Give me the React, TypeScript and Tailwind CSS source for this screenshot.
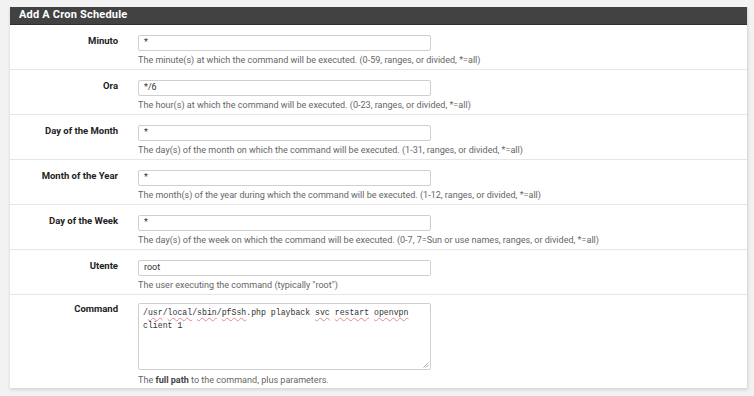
import type { ReactNode } from 'react';

interface FieldRow {
  label: string;
  value: string;
  help: ReactNode;
}

const ROWS: FieldRow[] = [
  {
    label: 'Minuto',
    value: '*',
    help: 'The minute(s) at which the command will be executed. (0-59, ranges, or divided, *=all)',
  },
  {
    label: 'Ora',
    value: '*/6',
    help: 'The hour(s) at which the command will be executed. (0-23, ranges, or divided, *=all)',
  },
  {
    label: 'Day of the Month',
    value: '*',
    help: 'The day(s) of the month on which the command will be executed. (1-31, ranges, or divided, *=all)',
  },
  {
    label: 'Month of the Year',
    value: '*',
    help: 'The month(s) of the year during which the command will be executed. (1-12, ranges, or divided, *=all)',
  },
  {
    label: 'Day of the Week',
    value: '*',
    help: 'The day(s) of the week on which the command will be executed. (0-7, 7=Sun or use names, ranges, or divided, *=all)',
  },
  {
    label: 'Utente',
    value: 'root',
    help: 'The user executing the command (typically "root")',
  },
];

const font = { fontFamily: 'Roboto, "Liberation Sans", sans-serif' };

// parole segnate dal correttore ortografico del browser
function Typo({ children }: { children: ReactNode }) {
  return (
    <span className="underline decoration-wavy decoration-[#e88a8a] decoration-[1px] underline-offset-[2px]">
      {children}
    </span>
  );
}

function Label({ children }: { children: ReactNode }) {
  return (
    <div className="w-[128px] shrink-0 pr-[20px] text-right text-[9.5px] font-bold leading-[12px] text-[#222]">
      {children}
    </div>
  );
}

export default function App() {
  return (
    <div
      className="h-[396px] w-[754px] overflow-hidden bg-[#f2f2f2] pl-[10px] pr-[6px] pt-[7px]"
      style={font}
    >
      <section className="border-r border-[#dcdcdc] bg-white shadow-[0_2px_3px_rgba(0,0,0,0.12)]">
        <h2 className="flex h-[18px] items-center border-b border-[#2e2e2e] bg-[#424242] pl-[9px] text-[11px] font-bold tracking-[0.2px] text-white">
          Add A Cron Schedule
        </h2>

        {ROWS.map((row) => (
          <div key={row.label} className="flex h-[45px] border-b border-[#e6e6e6] pt-[10px]">
            <Label>{row.label}</Label>
            <div className="flex flex-col">
              <div className="flex h-[16px] w-[293px] items-center rounded-[2px] border border-[#cfcfcf] bg-white px-[5px] text-[9px] text-[#333]">
                {row.value}
              </div>
              <p className="mt-[3px] whitespace-nowrap text-[9.05px] leading-[12px] text-[#666]">
                {row.help}
              </p>
            </div>
          </div>
        ))}

        <div className="flex h-[93px] pt-[8px]">
          <Label>Command</Label>
          <div className="flex flex-col">
            <div className="relative h-[67px] w-[293px] rounded-[2px] border border-[#cfcfcf] bg-white px-[4px] py-[2px]">
              <div
                className="text-[8.2px] leading-[13px] text-[#333]"
                style={{ fontFamily: '"Liberation Mono", "DejaVu Sans Mono", monospace' }}
              >
                /<Typo>usr</Typo>/<Typo>local</Typo>/<Typo>sbin</Typo>/<Typo>pfSsh</Typo>.php playback{' '}
                <Typo>svc</Typo> <Typo>restart</Typo> <Typo>openvpn</Typo>
                <br />
                client 1
              </div>
              <svg
                className="absolute bottom-[1px] right-[1px]"
                width="7"
                height="7"
                viewBox="0 0 7 7"
              >
                <path d="M6.5 1.5 L1.5 6.5 M6.5 4 L4 6.5" stroke="#999" strokeWidth="0.8" fill="none" />
              </svg>
            </div>
            <p className="mt-[4px] whitespace-nowrap text-[9.05px] leading-[12px] text-[#666]">
              The <b className="text-[#444]">full path</b> to the command, plus parameters.
            </p>
          </div>
        </div>
      </section>
    </div>
  );
}
